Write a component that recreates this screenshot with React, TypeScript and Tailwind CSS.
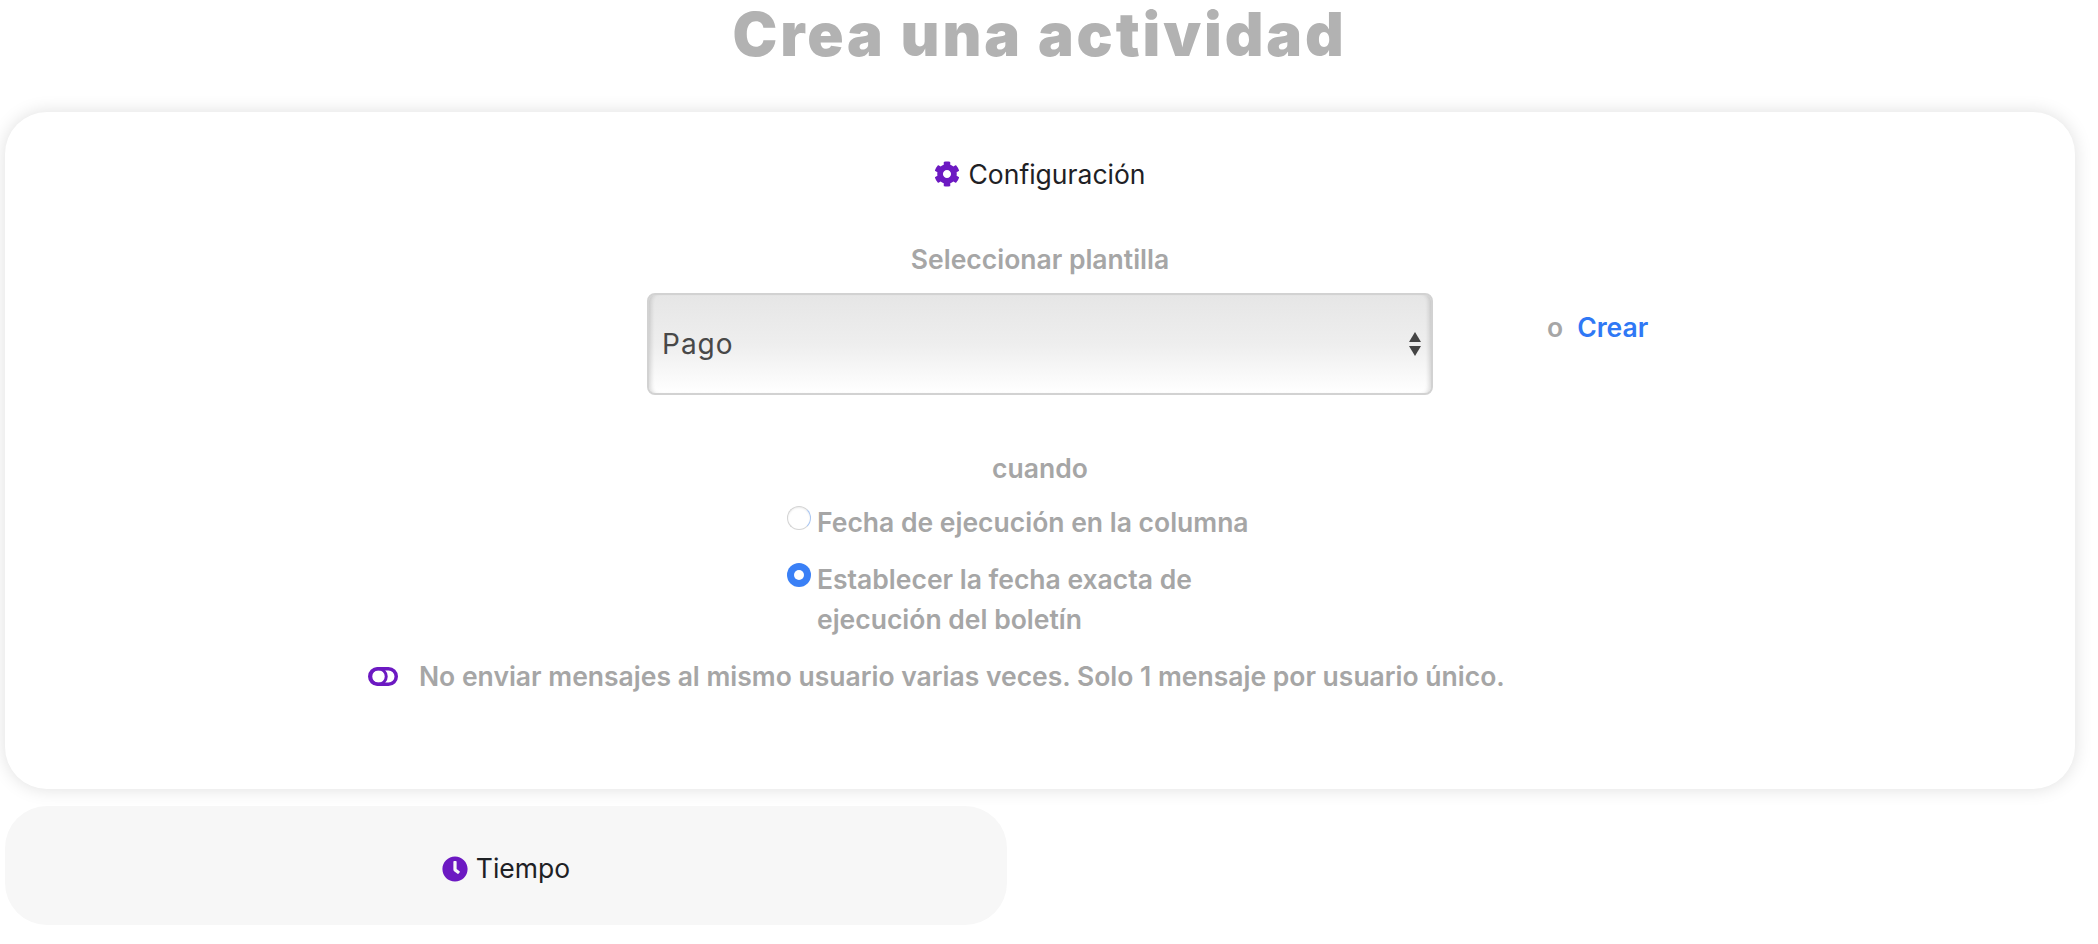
import { FaClock, FaCog } from 'react-icons/fa';

function RadioRow({ checked, label }: { checked?: boolean; label: string }) {
  return (
    <div className="flex w-[470px] items-start gap-[6px]">
      {checked ? (
        <div className="mt-[4px] flex h-[24px] w-[24px] shrink-0 items-center justify-center rounded-full bg-[#3a80f6]">
          <div className="h-[10px] w-[10px] rounded-full bg-white"></div>
        </div>
      ) : (
        <div className="mt-[4px] h-[24px] w-[24px] shrink-0 rounded-full border border-[#d4d4d4] border-r-[#a9c6f2] bg-white shadow-[inset_0_1px_2px_rgba(0,0,0,0.08)]"></div>
      )}
      <span className="text-[26.5px] font-semibold leading-[40px] text-[#a6a6a6]">{label}</span>
    </div>
  );
}

export default function App() {
  return (
    <div className="w-[2080px] pl-[5px] font-['Inter',sans-serif]">
      <h1 className="h-[112px] pr-[6px] pt-[1px] text-center text-[60px] font-black leading-[66px] tracking-[2.9px] text-[#b2b2b2]">
        Crea una actividad
      </h1>

      <div className="w-[2070px] rounded-[42px] bg-white pb-[97px] pt-[46px] shadow-[0_0_18px_rgba(0,0,0,0.13)]">
        <div className="flex items-center justify-center gap-[8px] text-[26.5px] leading-[32px] text-[#1e2125]">
          <FaCog className="h-[26px] w-[26px] text-[#6c19c2]" />
          <span>Configuración</span>
        </div>

        <p className="mt-[53px] text-center text-[26.5px] font-semibold leading-[32px] text-[#a6a6a6]">
          Seleccionar plantilla
        </p>

        <div className="mt-[18px] grid grid-cols-[1fr_786px_1fr]">
          <div></div>
          <div className="flex h-[102px] items-center justify-between rounded-[8px] border-2 border-[#d2d2d2] bg-gradient-to-b from-[#e6e6e6] via-[#eeeeee] to-white pl-[13px] pr-[10px] shadow-[inset_5px_0_4px_-3px_rgba(0,0,0,0.14),inset_-5px_0_4px_-3px_rgba(0,0,0,0.14)]">
            <span className="text-[28px] font-normal tracking-[1px] text-[#484848]">Pago</span>
            <svg width="12" height="24" viewBox="0 0 12 24" className="fill-[#444444]">
              <path d="M6 0 L12 10 L0 10 Z" />
              <path d="M0 14 L12 14 L6 24 Z" />
            </svg>
          </div>
          <div className="pl-[114px] pt-[17px] text-[26.5px] font-semibold leading-[34px]">
            <span className="text-[#a6a6a6]">o</span>
            <span className="ml-[14px] text-[#2f78f5]">Crear</span>
          </div>
        </div>

        <p className="mt-[57px] text-center text-[26.5px] font-semibold leading-[32px] text-[#a6a6a6]">cuando</p>

        <div className="mt-[18px] flex flex-col gap-[17px] pl-[782px]">
          <RadioRow label="Fecha de ejecución en la columna" />
          <RadioRow checked label="Establecer la fecha exacta de ejecución del boletín" />
        </div>

        <div className="mt-[21px] flex items-center gap-[21px] pl-[363px] text-[26.5px] font-semibold leading-[32px] text-[#a6a6a6]">
          <svg width="30" height="19" viewBox="0 0 30 19" fill="none" className="stroke-[#6c19c2]">
            <rect x="1.75" y="1.75" width="26.5" height="15.5" rx="7.75" strokeWidth="3.5" />
            <circle cx="10.5" cy="9.5" r="7.75" strokeWidth="3" />
          </svg>
          <span>No enviar mensajes al mismo usuario varias veces. Solo 1 mensaje por usuario único.</span>
        </div>
      </div>

      <div className="mt-[17px] flex h-[119px] w-[1002px] items-center justify-center gap-[8px] rounded-[42px] bg-[#f7f7f7] pt-[7px] text-[26.5px] text-[#1e2125]">
        <FaClock className="h-[26px] w-[26px] text-[#6c19c2]" />
        <span>Tiempo</span>
      </div>
    </div>
  );
}
